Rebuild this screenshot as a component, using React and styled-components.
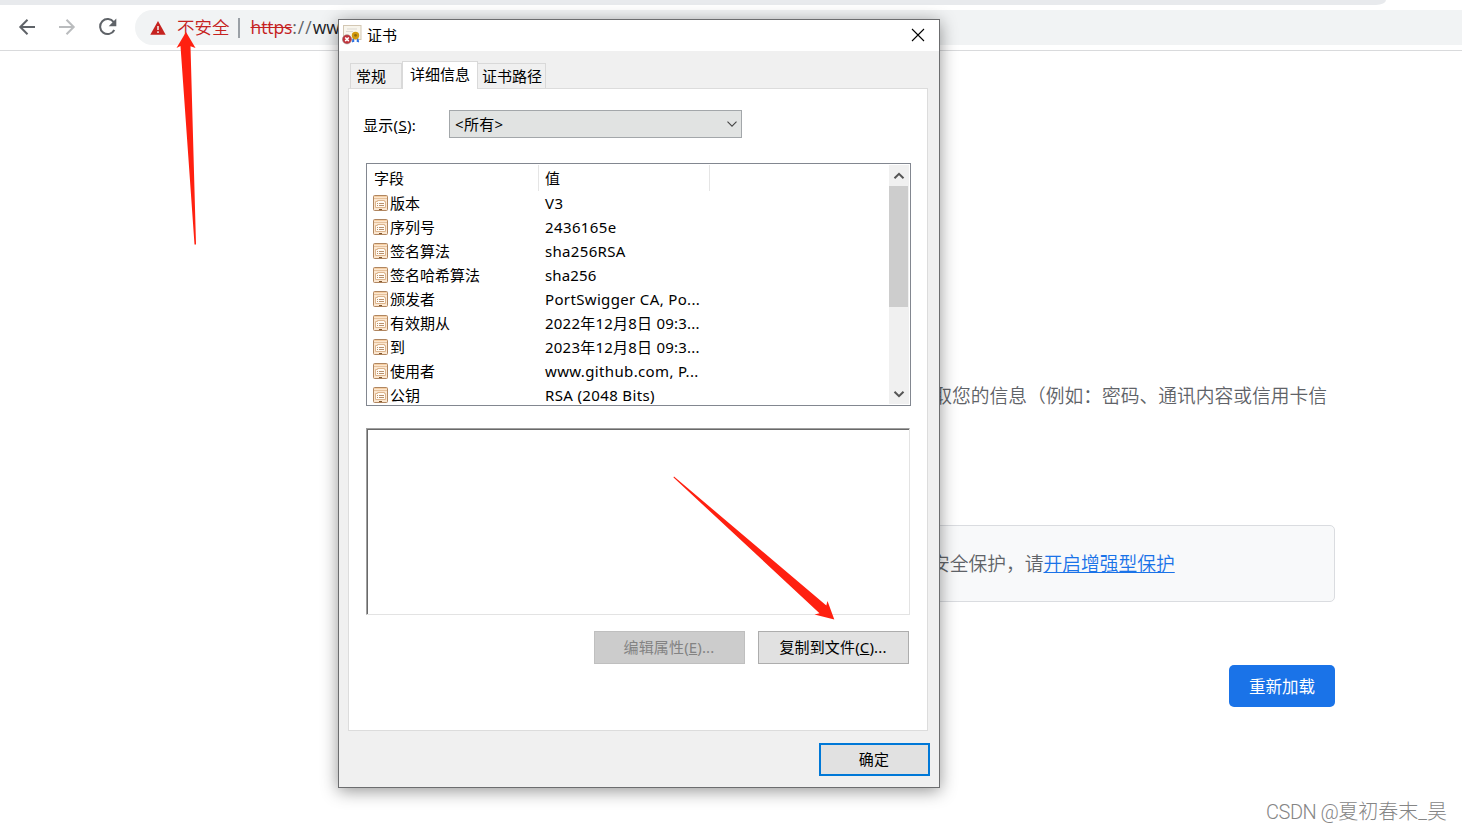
import styled, { createGlobalStyle, css } from 'styled-components'

const GlobalStyle = createGlobalStyle`
  * {
    box-sizing: border-box;
  }
  body {
    margin: 0;
    background: #fff;
    overflow: hidden;
    font-family: 'Noto Sans', 'Noto Sans CJK SC', sans-serif;
    color: #000;
  }
`

const Screen = styled.div`
  position: relative;
  width: 1462px;
  height: 832px;
  overflow: hidden;
  display: flex;
  flex-direction: column;
`

/* browser */

const TabStrip = styled.div`
  width: 1386px;
  height: 5px;
  background: #e8eaed;
  border-bottom-right-radius: 10px 5px;
`

const Toolbar = styled.div`
  height: 46px;
  padding: 5px 0;
  display: flex;
  align-items: center;
  border-bottom: 1px solid #d9dadc;
`

const NavButtons = styled.div`
  width: 135px;
  padding: 0 0 2px 17px;
  display: flex;
  gap: 20px;
  flex: none;

  > :last-child {
    margin-left: 1px;
  }
`

const AddressBar = styled.div`
  flex: 1;
  height: 35px;
  padding-left: 14px;
  border-radius: 18px 0 0 18px;
  background: #f1f3f4;
  display: flex;
  align-items: center;
  font-size: 17.5px;
  line-height: 35px;
  white-space: nowrap;
`

const Unsafe = styled.span`
  margin-left: 10px;
  color: #c5221f;
  font-family: 'Noto Sans CJK SC', sans-serif;
  font-weight: 350;
  line-height: 33px;
  padding-bottom: 2px;
`

const Separator = styled.span`
  width: 2px;
  height: 20px;
  margin: 0 11px 0 8px;
  background: #9aa0a6;
`

const Url = styled.span`
  color: #202124;
  font-family: 'Open Sans', sans-serif;
  letter-spacing: -0.1px;

  s {
    color: #c5221f;
  }
  i {
    font-style: normal;
    letter-spacing: 1px;
    color: #5f6368;
  }
`

const Page = styled.main`
  width: 750px;
  margin-left: 585px;
  padding-top: 330px;
  display: flex;
  flex-direction: column;
  font-family: 'Noto Sans CJK SC', sans-serif;
  font-size: 18.75px;
  line-height: 28px;
  font-weight: 350;
  color: #5f6368;
`

const Warning = styled.p`
  margin: 0;
  padding-right: 8px;
  text-align: right;
`

const Enhanced = styled.div`
  height: 77px;
  margin-top: 116px;
  padding: 0 0 1px 345px;
  border: 1px solid #dadce0;
  border-radius: 5px;
  background: #f8f9fa;
  display: flex;
  align-items: center;

  a {
    color: #1a73e8;
    text-decoration: underline;
  }
`

const Reload = styled.button`
  align-self: flex-end;
  width: 106px;
  height: 42px;
  margin-top: 63px;
  padding: 1px 0 0;
  border: none;
  border-radius: 5px;
  background: #1a73e8;
  color: #fff;
  font: 400 16.5px/41px 'Noto Sans CJK SC', sans-serif;
`

/* certificate dialog */

const Dialog = styled.section`
  position: absolute;
  left: 338px;
  top: 19px;
  width: 602px;
  height: 769px;
  border: 1px solid #6c6d6f;
  background: #f0f0f0;
  box-shadow: 0 3px 16px rgba(0, 0, 0, 0.42);
  display: flex;
  flex-direction: column;
  font-size: 15px;
  line-height: 24px;
`

const TitleBar = styled.header`
  height: 31px;
  padding: 0 14px 1px 3px;
  background: #fff;
  display: flex;
  align-items: center;
  gap: 5px;

  > :last-child {
    margin-left: auto;
  }
`

const Tabs = styled.nav`
  height: 37px;
  padding-left: 11px;
  display: flex;
  align-items: flex-end;
`

const Tab = styled.div`
  width: ${p => p.$w}px;
  height: 25px;
  padding-left: ${p => p.$pad}px;
  border: 1px solid #d9d9d9;
  border-bottom: none;
  border-left-width: ${p => (p.$first ? 1 : 0)}px;
  white-space: nowrap;
  ${p => p.$active && css`
    height: 28px;
    margin-bottom: -1px;
    border-left-width: 1px;
    background: #fff;
    z-index: 1;
  `}
`

const Panel = styled.div`
  width: 580px;
  height: 643px;
  margin-left: 9px;
  padding: 21px 0 0 14px;
  border: 1px solid #dcdcdc;
  background: #fff;
`

const ShowRow = styled.div`
  display: flex;
  align-items: center;

  label {
    width: 86px;
    padding-top: 2px;
    letter-spacing: 0.3px;
  }
`

const Select = styled.div`
  width: 293px;
  height: 28px;
  padding: 0 3px 0 5px;
  border: 1px solid #a3a7aa;
  background: #e1e3e2;
  display: flex;
  align-items: center;
  justify-content: space-between;
  letter-spacing: 0.3px;
`

const ListBox = styled.div`
  width: 545px;
  height: 243px;
  margin: 25px 0 0 3px;
  padding: 1px;
  border: 1px solid #828790;
  display: flex;
`

const Table = styled.div`
  flex: 1;
  overflow: hidden;
`

const HeadRow = styled.div`
  height: 26px;
  display: flex;
  line-height: 26px;

  span {
    width: 171px;
    padding-left: 6px;
    border-right: 1px solid #e5e5e5;
  }
`

const Row = styled.div`
  height: 24px;
  padding-left: 5px;
  display: flex;
  align-items: center;
  white-space: nowrap;
`

const Field = styled.span`
  width: 155px;
  margin-left: 2px;
`

const Value = styled.span`
  letter-spacing: ${p => p.$track}px;
`

const ScrollBar = styled.div`
  width: 20px;
  padding-right: 1px;
  background: #f0f0f0;
  display: flex;
  flex-direction: column;
  align-items: center;
`

const ScrollButton = styled.div`
  height: 21px;
  display: flex;
  align-items: center;
`

const Thumb = styled.div`
  width: 19px;
  height: 121px;
  margin-bottom: auto;
  background: #cdcdcd;
`

const DetailBox = styled.div`
  width: 544px;
  height: 187px;
  margin: 22px 0 0 3px;
  border: 1px solid #a0a0a0;
  border-right-color: #e3e3e3;
  border-bottom-color: #e3e3e3;
  box-shadow: inset 1px 1px 0 #696969;
`

const Actions = styled.div`
  margin-top: 16px;
  padding-right: 18px;
  display: flex;
  justify-content: flex-end;
  gap: 13px;
`

const Button = styled.button`
  width: ${p => p.$w || 151}px;
  height: 33px;
  padding: 0 1px 0 0;
  border: 1px solid #adadad;
  background: #e1e1e1;
  color: #000;
  font: inherit;
  letter-spacing: 0.15px;
  line-height: 31px;
  ${p => p.$default && css`
    border: 2px solid #0078d7;
    line-height: 29px;
  `}
  &:disabled {
    border-color: #bfbfbf;
    background: #cccccc;
    color: #838383;
  }
`

const Footer = styled.footer`
  padding: 12px 9px 0 0;
  display: flex;
  justify-content: flex-end;
`

/* things drawn over everything */

const Annotations = styled.svg`
  position: absolute;
  inset: 0;
`

const Watermark = styled.div`
  position: absolute;
  right: 15px;
  bottom: 6px;
  font-family: Roboto, 'Noto Sans CJK SC', sans-serif;
  font-size: 20px;
  font-weight: 300;
  line-height: 28px;
  color: #858585;
  white-space: nowrap;

  span {
    letter-spacing: -0.5px;
  }
`

const Arrow = ({ flip, color }) => (
  <svg width="20" height="20" viewBox="0 0 20 20" fill="none" stroke={color} strokeWidth="2" transform={flip ? 'scale(-1 1)' : undefined}>
    <path d="M18 10H3.5M10.5 2.8L3.3 10l7.2 7.2" />
  </svg>
)

const ReloadIcon = () => (
  <svg width="20" height="20" viewBox="0 0 20 20">
    <path d="M16.3 13A7.500 7.500 0 1 1 15.700 5.200" fill="none" stroke="#5f6368" strokeWidth="2" />
    <path d="M18.3 1.6v7.6h-7.6z" fill="#5f6368" />
  </svg>
)

const WarningIcon = () => (
  <svg width="18" height="18" viewBox="0 0 18 18">
    <path d="M9 2l7.7 13.8H1.3z" fill="#c5221f" />
    <path d="M9 7v4M9 12.3v1.8" stroke="#f1f3f4" strokeWidth="1.5" />
  </svg>
)

const CertIcon = () => (
  <svg width="20" height="20" viewBox="0 0 20 20">
    <rect x="1.5" y=".5" width="17.500" height="14" fill="#f8f5ec" stroke="#d3c7b3" />
    <path d="M5 4h10M4 6.500h7" stroke="#ddd9d1" />
    <path d="M11.500 12.500l-1.200 4.500 2-.8M15.500 12.500l1.200 4.500-2-.8" fill="#2f74e0" stroke="#2f74e0" />
    <circle cx="13.500" cy="10.500" r="3.700" fill="#d39a0c" />
    <circle cx="13.500" cy="10.300" r="1.400" fill="#8e6a13" />
    <circle cx="5" cy="14.300" r="4.600" fill="#c0323a" stroke="#9c8b8b" strokeWidth=".6" />
    <path d="M3.200 12.500l3.600 3.600M6.800 12.500l-3.600 3.600" stroke="#fff" strokeWidth="1.6" />
  </svg>
)

const FieldIcon = () => (
  <svg width="15" height="16" viewBox="0 0 15 16">
    <rect x=".5" y=".5" width="14" height="15" rx="1" fill="#fbe6cf" stroke="#b08660" />
    <path d="M1 1.500h13" stroke="#f6cfa4" />
    <path d="M1 3.500h13" stroke="#e6c19b" />
    <path d="M2.500 6.500h2v-1h7v1h1v6h-10z" fill="#fffaf3" stroke="#dcb48c" />
    <path d="M4 8.500h1M6 8.500h5M4 10.500h1M6 10.500h5" stroke="#b8906c" />
    <path d="M6 14.500h3" stroke="#80552c" />
  </svg>
)

const Chevron = ({ up, bold }) => (
  <svg width="12" height="8" viewBox="0 0 12 8" fill="none" stroke={bold ? '#555' : '#444'} strokeWidth={bold ? 2 : 1.1}>
    <path d={up ? 'M1.5 6.3L6 1.8l4.5 4.5' : 'M1.5 1.7L6 6.2l4.5-4.5'} />
  </svg>
)

const rows = [
  ['版本', 'V3', 0.5],
  ['序列号', '2436165e', 0.38],
  ['签名算法', 'sha256RSA', 0.33],
  ['签名哈希算法', 'sha256', 0.15],
  ['颁发者', 'PortSwigger CA, Po...', 0.35],
  ['有效期从', '2022年12月8日 09:3...', 0.22],
  ['到', '2023年12月8日 09:3...', 0.22],
  ['使用者', 'www.github.com, P...', 0.36],
  ['公钥', 'RSA (2048 Bits)', 0.36],
]

const App = () => (
  <Screen>
    <GlobalStyle />
    <TabStrip />
    <Toolbar>
      <NavButtons>
        <Arrow color="#5f6368" />
        <Arrow color="#babcbe" flip />
        <ReloadIcon />
      </NavButtons>
      <AddressBar>
        <WarningIcon />
        <Unsafe>不安全</Unsafe>
        <Separator />
        <Url><s>https</s><i>://</i>ww</Url>
      </AddressBar>
    </Toolbar>
    <Page>
      <Warning>取您的信息（例如：密码、通讯内容或信用卡信</Warning>
      <Enhanced>
        <span>安全保护，请<a>开启增强型保护</a></span>
      </Enhanced>
      <Reload>重新加载</Reload>
    </Page>

    <Dialog>
      <TitleBar>
        <CertIcon />
        <span>证书</span>
        <svg width="14" height="14" viewBox="0 0 14 14" stroke="#000" strokeWidth="1.1">
          <path d="M1 1l12 12M13 1L1 13" />
        </svg>
      </TitleBar>
      <Tabs>
        <Tab $w={52} $pad={5} $first>常规</Tab>
        <Tab $w={76} $pad={7} $active>详细信息</Tab>
        <Tab $w={68} $pad={4}>证书路径</Tab>
      </Tabs>
      <Panel>
        <ShowRow>
          <label>显示(<u>S</u>):</label>
          <Select>
            <span>&lt;所有&gt;</span>
            <Chevron />
          </Select>
        </ShowRow>
        <ListBox>
          <Table>
            <HeadRow>
              <span>字段</span>
              <span>值</span>
            </HeadRow>
            {rows.map(([field, value, track]) => (
              <Row key={field}>
                <FieldIcon />
                <Field>{field}</Field>
                <Value $track={track}>{value}</Value>
              </Row>
            ))}
          </Table>
          <ScrollBar>
            <ScrollButton><Chevron up bold /></ScrollButton>
            <Thumb />
            <ScrollButton><Chevron bold /></ScrollButton>
          </ScrollBar>
        </ListBox>
        <DetailBox />
        <Actions>
          <Button disabled>编辑属性(<u>E</u>)...</Button>
          <Button>复制到文件(<u>C</u>)...</Button>
        </Actions>
      </Panel>
      <Footer>
        <Button $w={111} $default>确定</Button>
      </Footer>
    </Dialog>

    <Annotations width="1462" height="832" fill="#ff2010">
      <path d="M186 32l9.500 16-5-1.800L196 244.500h-1.500L180.500 46l-4 2z" />
      <path d="M674 476.500L826.300 605.500l1.200-4.500L834.300 619.500 814.500 614.500l5-1.300L673.500 477.500z" />
    </Annotations>
    <Watermark><span>CSDN @</span>夏初春末_昊</Watermark>
  </Screen>
)

export default App
